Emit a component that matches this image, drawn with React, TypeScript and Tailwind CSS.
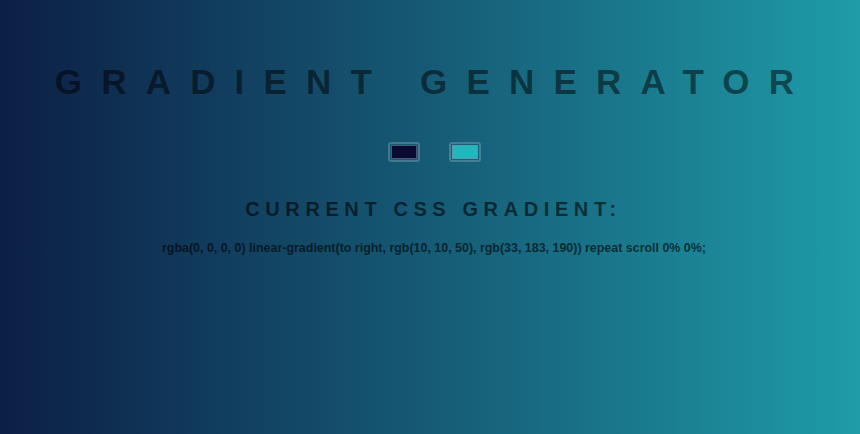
export default function App() {
  return (
    <div
      className="w-full h-[434px] overflow-hidden bg-gradient-to-r from-[#0c1f45] to-[#1f9ca8] flex flex-col items-center"
      style={{ fontFamily: '"Liberation Sans", Arial, sans-serif' }}
    >
      <h1 className="mt-[64px] text-[35px] leading-[35px] font-bold tracking-[19.2px] text-black/50 pl-[8px] whitespace-nowrap">
        GRADIENT GENERATOR
      </h1>
      <div className="mt-[43px] flex items-center gap-[29px] pl-[8px]">
        <div className="w-[32px] h-[20px] rounded-[3px] border-2 border-white/20 p-[1px]">
          <div className="w-full h-full border border-[#7a8a99]/60 bg-[#0a0a32]" />
        </div>
        <div className="w-[32px] h-[20px] rounded-[3px] border-2 border-white/20 p-[1px]">
          <div className="w-full h-full border border-[#7a8a99]/60 bg-[#21b7be]" />
        </div>
      </div>
      <h2 className="mt-[37px] text-[20px] leading-[20px] font-bold tracking-[5.6px] text-black/60 pl-[7px] whitespace-nowrap">
        CURRENT CSS GRADIENT:
      </h2>
      <p className="mt-[23px] text-[12.45px] leading-[13px] font-bold text-black/65 whitespace-nowrap pl-[8px]">
        rgba(0, 0, 0, 0) linear-gradient(to right, rgb(10, 10, 50), rgb(33, 183, 190)) repeat scroll 0% 0%;
      </p>
    </div>
  );
}
